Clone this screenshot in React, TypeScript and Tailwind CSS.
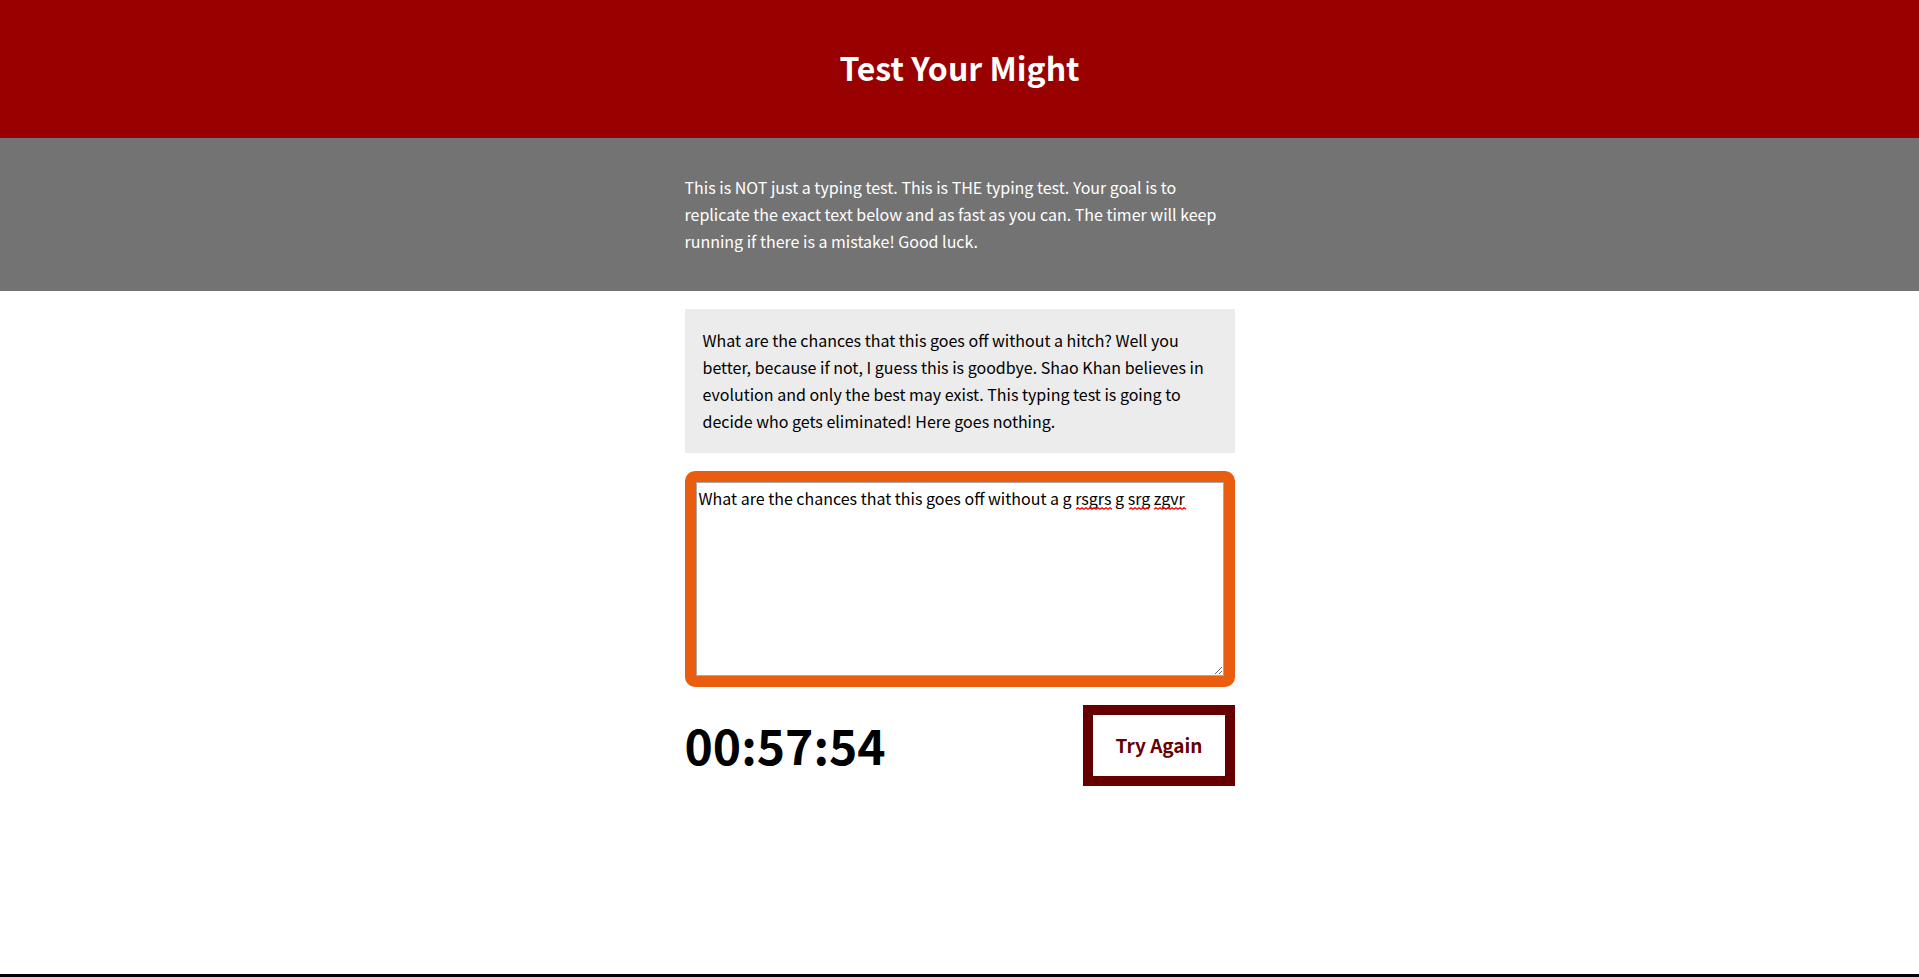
import { useState } from "react";

const START_TEXT =
  "What are the chances that this goes off without a g rsgrs g srg zgvr";

// Zigzag underline below misspelled words, drawn in 4px waves.
function squiggle(from: number, to: number) {
  let d = `M${from} 2.25`;
  for (let x = from; x + 2 <= to; x += 4) {
    d += ` l2 -1.5 l2 1.5`;
  }
  return d;
}

export default function App() {
  const [text, setText] = useState(START_TEXT);

  return (
    <div className="flex min-h-screen flex-col bg-white font-['Noto_Sans_CJK_SC',sans-serif] text-base/[27px] text-black">
      <header className="bg-[#990000] px-4 pt-10 pb-11 text-center text-white">
        <h1 className="text-[32px]/[54px] font-bold">Test Your Might</h1>
      </header>

      <section className="bg-[#737373] px-4 py-9 text-white">
        <p className="mx-auto max-w-[550px]">
          This is NOT just a typing test. This is THE typing test. Your goal is
          to replicate the exact text below and as fast as you can. The timer
          will keep running if there is a mistake! Good luck.
        </p>
      </section>

      <main className="mx-auto flex w-full max-w-[550px] flex-1 flex-col gap-[18px] pt-[18px]">
        <p className="bg-[#ececec] p-[18px]">
          What are the chances that this goes off without a hitch? Well you
          better, because if not, I guess this is goodbye. Shao Khan believes in
          evolution and only the best may exist. This typing test is going to
          decide who gets eliminated! Here goes nothing.
        </p>

        <div className="relative rounded-[10px] border-[11px] border-[#e95d0f]">
          <textarea
            aria-label="Typing area"
            spellCheck={false}
            value={text}
            onChange={(e) => setText(e.target.value)}
            className="block h-[194px] w-full resize border border-[#a9a9a9] bg-white px-0.5 py-0.5 outline-none"
          />
          {text === START_TEXT && (
            <svg
              aria-hidden="true"
              className="pointer-events-none absolute top-[25px] left-0 h-1 w-full"
              fill="none"
              stroke="#ff0000"
              strokeWidth="1.3"
            >
              <path d={squiggle(380, 415)} />
              <path d={squiggle(433, 453)} />
              <path d={squiggle(458, 489)} />
            </svg>
          )}
        </div>

        <div className="flex items-center justify-between">
          <div role="timer" className="pb-1 text-5xl/[72px] font-bold">
            00:57:54
          </div>
          <button
            type="button"
            onClick={() => setText("")}
            className="border-10 border-[#660000] bg-white px-[22px] pt-4 pb-[18px] text-[19px]/[27px] font-bold text-[#660000]"
          >
            Try Again
          </button>
        </div>
      </main>

      <footer className="h-[3px] bg-[#00000a]" />
    </div>
  );
}
